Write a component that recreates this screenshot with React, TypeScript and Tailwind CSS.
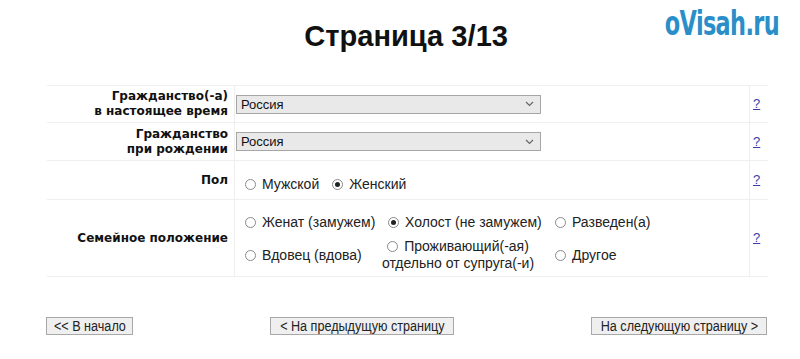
import React from "react";

function Radio({ checked }: { checked?: boolean }) {
  return (
    <span className="inline-flex h-[11px] w-[11px] shrink-0 items-center justify-center rounded-full border border-[#8a8a8a] bg-white">
      {checked && <span className="h-[5px] w-[5px] rounded-full bg-[#222]" />}
    </span>
  );
}

function Option({ label, checked }: { label: string; checked?: boolean }) {
  return (
    <span className="inline-flex items-center gap-[6px] whitespace-nowrap">
      <Radio checked={checked} />
      <span>{label}</span>
    </span>
  );
}

function FakeSelect({ value }: { value: string }) {
  return (
    <div className="flex h-[19px] w-[305px] items-center justify-between border border-[#a6a6a6] bg-[#e9e9e9] pl-[4px] pr-[6px] text-[13px] leading-[15px] text-[#111]">
      <span>{value}</span>
      <svg width="9" height="6" viewBox="0 0 9 6" fill="none">
        <path d="M1 1l3.5 3.5L8 1" stroke="#666" strokeWidth="1.2" />
      </svg>
    </div>
  );
}

function Help() {
  return (
    <div className="flex items-center border-b border-[#efefef] pl-[3px]">
      <a className="text-[13px] text-[#3b3bab] underline">?</a>
    </div>
  );
}

function Label({ children }: { children: React.ReactNode }) {
  return (
    <div className="flex items-center justify-end border-b border-r border-[#efefef] pr-[6px] text-right font-['DejaVu_Sans',Verdana,sans-serif] text-[12px] font-bold leading-[15px] text-[#111]">
      <div>{children}</div>
    </div>
  );
}

function NavButton({ width, margin, children }: { width: string; margin: string; children: React.ReactNode }) {
  return (
    <button className={`${margin} ${width} flex h-[18px] items-center justify-center overflow-visible whitespace-nowrap border border-[#a8a8a8] bg-[#efefef]`}>
      <span className="inline-block scale-x-[0.9]">{children}</span>
    </button>
  );
}

export default function App() {
  return (
    <div className="relative h-[359px] w-[800px] overflow-hidden bg-white font-['Liberation_Sans',Arial,sans-serif] text-[#222]">
      <div className="absolute right-[21px] top-[3px] origin-right scale-x-[0.66] font-['DejaVu_Sans',Arial,sans-serif] text-[34px] font-bold leading-[40px] tracking-[-1px] text-[#2a8fc8]">
        oVisah.ru
      </div>

      <div className="flex h-[85px] justify-center pt-[18px] pl-[12px]">
        <h1 className="origin-center scale-x-[0.97] text-[30px] font-bold leading-[36px] text-[#111]">
          Страница 3/13
        </h1>
      </div>

      <div className="ml-[47px] grid w-[721px] grid-cols-[188px_515px_18px] grid-rows-[37px_38px_39px_77px] border-t border-[#efefef]">
        <Label>
          Гражданство(-а)
          <br />
          в настоящее время
        </Label>
        <div className="flex items-center border-b border-r border-[#efefef] pl-[1px]">
          <FakeSelect value="Россия" />
        </div>
        <Help />

        <Label>
          Гражданство
          <br />
          при рождении
        </Label>
        <div className="flex items-center border-b border-r border-[#efefef] pl-[1px]">
          <FakeSelect value="Россия" />
        </div>
        <Help />

        <Label>Пол</Label>
        <div className="flex items-center gap-[13px] border-b border-r border-[#efefef] pl-[10px] pt-[8px] text-[14px]">
          <Option label="Мужской" />
          <Option label="Женский" checked />
        </div>
        <Help />

        <Label>Семейное положение</Label>
        <div className="grid grid-cols-[137px_166px_1fr] grid-rows-[34px_32px] border-b border-r border-[#efefef] pl-[10px] pt-[5px] text-[14px] leading-[17px]">
          <div className="flex items-center">
            <Option label="Женат (замужем)" />
          </div>
          <div className="flex items-center pl-[6px]">
            <Option label="Холост (не замужем)" checked />
          </div>
          <div className="flex items-center pl-[7px]">
            <Option label="Разведен(а)" />
          </div>
          <div className="flex items-center">
            <Option label="Вдовец (вдова)" />
          </div>
          <div className="flex w-[152px] flex-col items-center justify-center">
            <Option label="Проживающий(-ая)" />
            <span className="whitespace-nowrap">отдельно от супруга(-и)</span>
          </div>
          <div className="flex items-center pl-[7px]">
            <Option label="Другое" />
          </div>
        </div>
        <Help />
      </div>

      <div className="mt-[40px] flex items-center text-[14px] leading-[16px] text-[#222]">
        <NavButton margin="ml-[46px]" width="w-[87px]">&lt;&lt; В начало</NavButton>
        <NavButton margin="ml-[137px]" width="w-[184px]">&lt; На предыдущую страницу</NavButton>
        <NavButton margin="ml-[137px]" width="w-[176px]">На следующую страницу &gt;</NavButton>
      </div>
    </div>
  );
}
